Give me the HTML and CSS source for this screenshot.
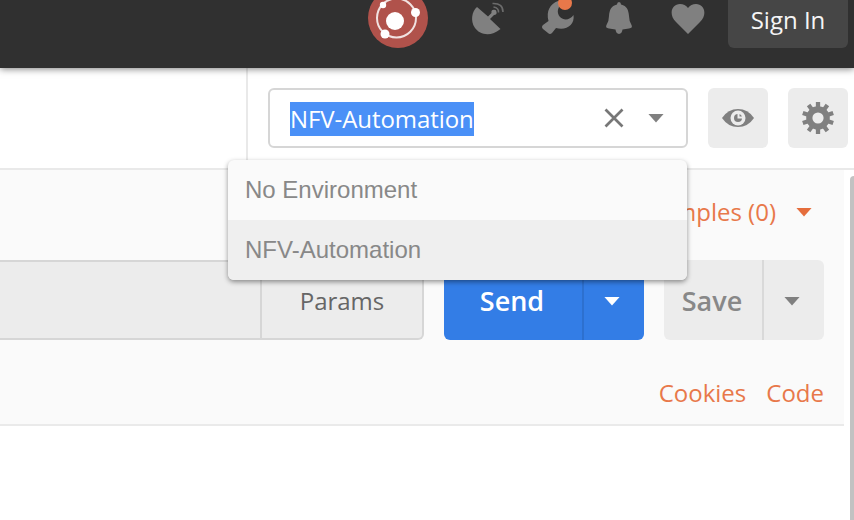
FILE: index.html
```html
<!DOCTYPE html>
<html lang="en">
<head>
<meta charset="utf-8">
<title>Environment selector</title>
<link rel="stylesheet" href="styles.css">
</head>
<body>
<header class="topbar">
  <svg class="icon sync" viewBox="368 0 60 48"><circle cx="398" cy="18" r="30" fill="#b0524b"/><circle cx="396.500" cy="18" r="19.500" fill="none" stroke="#f1e2e1" stroke-width="2"/><g fill="#fff"><circle cx="395" cy="21" r="9"/><circle cx="383" cy="5" r="3.200"/><circle cx="415.500" cy="12.500" r="4.500"/><circle cx="385" cy="34" r="4.500"/></g></svg>
  <svg class="icon dish" viewBox="470 0 36 48"><path d="M477 7 L488 16.500 L491.500 13 A2.600 2.600 0 1 1 494 15 L490 19 L500.500 29 C491 37 480 35 475 28 C470 21 472 11 477 7Z" fill="#808080"/><path d="M493.500 7 Q499 8 498.500 12.500 M492.500 3.500 Q503 3 503 12" fill="none" stroke="#6c6c6c" stroke-width="1.600"/></svg>
  <svg class="icon wrench" viewBox="540 0 36 48"><path d="M558 1 C550 4 546 11 548.500 21 L543 25 Q541 27 543 29 L548 33 Q550 35 552 33 L556 28 C566 31 575 25 573.500 15 C570 20 564 21 560 17 C556 12 558 7 562 4Z" fill="#808080"/><circle cx="565" cy="3" r="7" fill="#e8784a"/></svg>
  <svg class="icon bell" viewBox="604 0 30 48"><path d="M619 2 Q621 2 621 4.500 C627 6 628.500 10 629 16 Q629 21 631.500 25 Q633 28 629 28.500 L622.500 29.500 Q622 33.500 619 34 Q616 33.500 615.500 29.500 L609 28.500 Q605 28 606.500 25 Q609 21 609 16 C609.500 10 611 6 617 4.500 Q617 2 619 2Z" fill="#808080"/></svg>
  <svg class="icon heart" viewBox="670 0 36 48"><path d="M688 34 L676 22 C668 14 672 4 680 4 Q685 4 688 8 Q691 4 696 4 C704 4 708 14 700 22Z" fill="#808080"/></svg>
  <button class="sign-in"><span>Sign In</span></button>
</header>
<section class="envbar">
  <div class="env-tools">
    <div class="select">
      <span class="selected">NFV-Automation</span>
      <svg class="clear" viewBox="0 0 20 20"><path d="M1.500 1.500 18.500 18.500M18.500 1.500 1.500 18.500" stroke="#777" stroke-width="2.700"/></svg>
      <i class="caret"></i>
      <ul class="menu">
        <li class="none">No Environment</li>
        <li class="active">NFV-Automation</li>
      </ul>
    </div>
    <button class="square"><svg viewBox="0 0 32 20"><path d="M0 10 Q6 1 16 1 Q26 1 32 10 Q26 19 16 19 Q6 19 0 10Z" fill="#808080"/><circle cx="16" cy="10" r="7.500" fill="#ececec"/><circle cx="16" cy="10" r="4" fill="#808080"/><path d="M16.500 5 V9.500 H21" fill="none" stroke="#ececec" stroke-width="2"/></svg></button>
    <button class="square"><svg class="gear" viewBox="-16 -16 32 32"><path d="M0-16V16M-9.400-12.940 9.400 12.940M9.400-12.940-9.400 12.940M-15.200-4.940 15.200 4.940M15.200-4.940-15.200 4.940" stroke="#808080" stroke-width="4.300"/><circle r="8.700" fill="#ececec" stroke="#808080" stroke-width="6.200"/></svg></button>
  </div>
</section>
<main class="workspace">
  <section class="request">
    <div class="examples"><span>Examples (0)</span><i class="caret"></i></div>
    <div class="row">
      <div class="url"><button class="params"><span>Params</span></button></div>
      <div class="split send"><button><span>Send</span></button><button class="more"><i class="caret"></i></button></div>
      <div class="split save"><button><span>Save</span></button><button class="more"><i class="caret"></i></button></div>
    </div>
    <nav class="links"><a class="cookies">Cookies</a><a class="code">Code</a></nav>
  </section>
  <div class="scrollbar"></div>
</main>
</body>
</html>
```
FILE: styles.css
```css
* { box-sizing: border-box; }
body { margin: 0; width: 854px; height: 520px; overflow: hidden; background: #fff; font: 24px/32px "Open Sans", sans-serif; }
button { border: 0; padding: 0; font: inherit; color: inherit; background: none; }
svg { display: block; }
.caret { width: 16px; height: 9px; background: #808080; clip-path: polygon(0 0, 100% 0, 50% 100%); flex: none; }

.topbar { position: relative; z-index: 1; height: 68px; display: flex; align-items: flex-start; justify-content: flex-end; padding-right: 6px; background: #303030; box-shadow: 0 1px 7px rgba(0, 0, 0, .5); }
.icon { height: 48px; flex: none; }
.sync { width: 60px; margin-right: 42px; }
.dish { width: 36px; margin-right: 34px; }
.wrench { width: 36px; margin-right: 28px; }
.bell { width: 30px; margin-right: 36px; }
.heart { width: 36px; margin-right: 22px; }
.sign-in { width: 120px; height: 48px; padding-bottom: 9px; border-radius: 0 0 6px 6px; background: #464646; color: #f5f5f5; }

.envbar { height: 102px; display: flex; justify-content: flex-end; border-bottom: 2px solid #e9e9e9; }
.env-tools { width: 608px; display: flex; gap: 20px; padding: 20px 6px 0 20px; border-left: 2px solid #e9e9e9; }
.select { position: relative; z-index: 2; width: 420px; height: 60px; display: flex; align-items: center; border: 2px solid #d6d6d6; border-radius: 6px; padding: 0 22px 0 20px; }
.selected { height: 34px; margin-top: 2px; line-height: 34px; letter-spacing: -.07px; background: #4a90f7; color: #fff; }
.clear { width: 20px; height: 20px; margin: 0 24px 0 auto; }
.square { width: 60px; height: 60px; display: grid; place-items: center; border-radius: 6px; background: #ececec; }
.square svg { width: 32px; height: 20px; }
.square .gear { height: 32px; }
.menu { position: absolute; top: 70px; left: -42px; width: 459px; margin: 0; padding: 0; overflow: hidden; list-style: none; border-radius: 6px; background: #fafafa; box-shadow: 0 2px 5px rgba(0, 0, 0, .42); color: #888; font: 24px/59px "Liberation Sans", sans-serif; }
.menu li { height: 60px; padding-left: 17px; }
.menu .active { background: #efefef; }

.workspace { display: flex; height: 350px; justify-content: space-between; }
.request { width: 844px; height: 256px; padding-right: 20px; background: #fafafa; border-bottom: 2px solid #eaeaea; }
.examples { height: 90px; display: flex; align-items: center; justify-content: flex-end; gap: 20px; padding: 0 12px 6px 0; color: #e8784a; }
.examples .caret { background: #e56d3c; }
.row { display: flex; gap: 20px; height: 80px; }
.url { width: 424px; display: flex; justify-content: flex-end; border: 2px solid #d6d6d6; border-left: 0; border-radius: 0 6px 6px 0; background: #ececec; }
.params { width: 162px; border-left: 2px solid #d6d6d6; color: #666; padding-top: 2px; }
.split { display: flex; border-radius: 6px; overflow: hidden; font-size: 27px; font-weight: 600; letter-spacing: .5px; }
.split button { flex: 1; padding: 2px 2px 0 0; }
.split .more { flex: none; width: 62px; display: grid; place-items: center; border-left: 2px solid #d9d9d9; padding: 2px 4px 0 0; }
.send { width: 200px; background: #337de6; color: #fff; }
.send .more { border-color: #2d70cf; }
.send .caret { background: #fff; }
.save { width: 160px; background: #ececec; color: #888; }
.links { display: flex; justify-content: flex-end; gap: 20px; padding-top: 37px; color: #e8784a; }
.scrollbar { width: 4px; height: 344px; margin-top: 6px; border-radius: 4px 0 0 0; background: #c2c2c2; }
```
